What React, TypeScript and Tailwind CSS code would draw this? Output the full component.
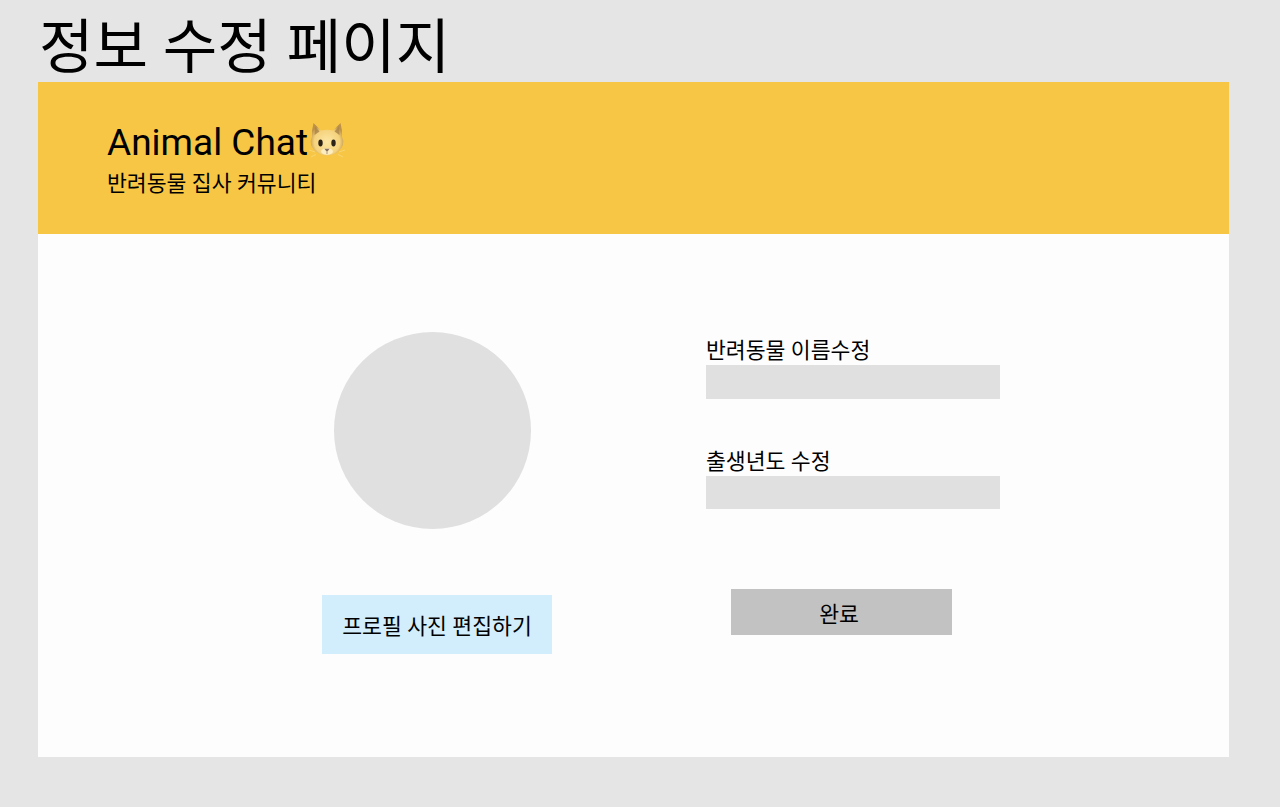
const fontStack = "font-['Roboto','Noto_Sans_CJK_KR',sans-serif]";

function CatFace() {
  return (
    <svg width="36" height="38" viewBox="0 0 36 38" className="shrink-0 ml-[1px] -mt-[5px]">
      <defs>
        <radialGradient id="catFur" cx="50%" cy="58%" r="56%">
          <stop offset="0%" stopColor="#fde7a4" />
          <stop offset="70%" stopColor="#f5d27c" />
          <stop offset="100%" stopColor="#bd9148" />
        </radialGradient>
      </defs>
      <path d="M4.5 1 L12 8.5 Q18 7.2 24 8.5 L31.5 1 Q33.5 8 33 15 Q35.5 20 33 25 Q28 33.5 18 33.5 Q8 33.5 3 25 Q0.5 20 3 15 Q2.5 8 4.5 1 Z" fill="url(#catFur)" />
      <path d="M6 4.5 L10.5 9.5 L5.5 13 Z M30 4.5 L25.5 9.5 L30.5 13 Z" fill="#a98347" opacity="0.8" />
      <ellipse cx="11.5" cy="21" rx="2.2" ry="3.4" fill="#2b2318" />
      <ellipse cx="24.5" cy="21" rx="2.2" ry="3.4" fill="#2b2318" />
      <ellipse cx="18" cy="29.5" rx="6" ry="3.2" fill="#fdeec2" />
      <path d="M15.4 26.8 H20.6 L18 30 Z" fill="#85705f" />
      <path d="M18 30 V32" stroke="#85705f" strokeWidth="0.7" fill="none" />
      <path d="M0 28 L6 30 M36 28 L30 30 M2 35 L7 32.5 M34 35 L29 32.5" stroke="#f8e2a0" strokeWidth="0.5" fill="none" />
    </svg>
  );
}

function Field({ label }: { label: string }) {
  return (
    <div>
      <label className="block h-[27px] text-[21.6px] leading-[25px] whitespace-nowrap text-black">{label}</label>
      <input className="block w-[294px] h-[33.5px] bg-[#e0e0e0] outline-none" />
    </div>
  );
}

export default function App() {
  return (
    <div className={`min-h-[807px] bg-[#e5e5e5] pl-[38px] text-black ${fontStack}`}>
      <h1 className="h-[82px] pl-[1px] text-[59.3px] leading-[96px] whitespace-nowrap font-normal">정보 수정 페이지</h1>
      <div className="w-[1191px]">
        <header className="h-[152px] bg-[#f7c644] pl-[69px] pt-[37px]">
          <div className="flex items-center h-[48px]">
            <span className="text-[37px] leading-[48px]">Animal Chat</span>
            <CatFace />
          </div>
          <p className="mt-[3px] text-[21.6px] leading-[27px]">반려동물 집사 커뮤니티</p>
        </header>
        <main className="h-[523px] bg-[#fdfdfd] flex pl-[284px]">
          <div className="w-[384px] pt-[98px]">
            <div className="ml-[12px] w-[197px] h-[197px] rounded-full bg-[#e0e0e0]" />
            <button className="mt-[66px] w-[230px] h-[59px] pt-[5px] bg-[#d2edfb] text-[21.6px] text-black">프로필 사진 편집하기</button>
          </div>
          <div className="pt-[104px]">
            <Field label="반려동물 이름수정" />
            <div className="mt-[50px]">
              <Field label="출생년도 수정" />
            </div>
            <button className="block mt-[80px] ml-[25px] w-[221px] h-[46px] pt-[7px] pr-[5px] bg-[#c2c2c2] text-[21.6px] text-black">완료</button>
          </div>
        </main>
      </div>
    </div>
  );
}
